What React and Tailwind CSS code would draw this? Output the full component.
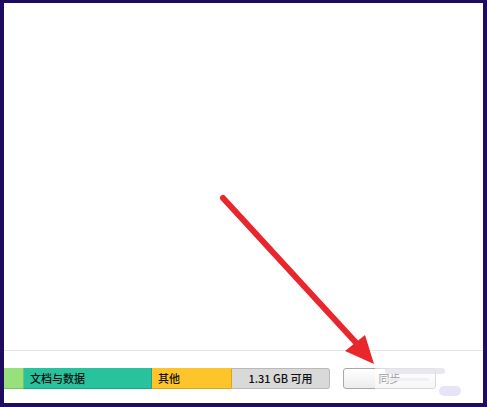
export default function App() {
  return (
    <div className="relative h-[407px] w-[487px] overflow-hidden border-[#1f0b5f] bg-white border-t-[3px] border-l-4 border-r-4 border-b-4 font-['Noto_Sans_CJK_SC',sans-serif]">
      <div className="flex h-full flex-col">
        <div className="flex-1" />
        <div className="h-px bg-[#e4e4e4]" />
        <div className="flex h-[52px] items-start pt-[17px]">
          {/* storage bar */}
          <div className="flex h-[21px] text-[11px] leading-none text-[#111]">
            <div className="w-[19px] border-b border-[#7cc265] bg-[#98e07c]" />
            <div className="flex w-[128px] items-center border-b border-l border-[#1fa583] border-l-[#7cc265] bg-[#28c39d] pl-[6px] font-medium">
              文档与数据
            </div>
            <div className="flex w-[80px] items-center border-b border-l border-[#d9a51e] border-l-[#1fa583] bg-[#fdc52a] pl-[6px] font-medium">
              其他
            </div>
            <div className="flex w-[99px] items-center justify-center rounded-r-[3px] border border-l-[#d9a51e] border-[#b9b9b9] bg-[#d9d9d9] font-medium">
              1.31 GB 可用
            </div>
          </div>
          <button className="ml-[13px] flex h-[21px] w-[93px] items-center justify-center rounded-[3px] border border-[#a9a9a9] bg-gradient-to-b from-white to-[#ececec] text-[11px] leading-none text-[#222]">
            同步
          </button>
        </div>
      </div>

      {/* watermark */}
      <div className="absolute left-[371px] top-[352px] flex h-[38px] w-[90px] flex-col justify-center gap-[4px] bg-white/55 px-[10px]">
        <div className="h-[6px] w-[60px] rounded-sm bg-[#e2e2ea]/80" />
        <div className="h-[3px] w-[44px] rounded-sm bg-[#ececf2]/80" />
      </div>
      <div className="absolute left-[435px] top-[383px] h-[10px] w-[22px] rounded-full bg-[#e6e4f6]" />

      {/* red arrow */}
      <svg className="pointer-events-none absolute left-[-4px] top-[-3px]" width="487" height="407" viewBox="0 0 487 407">
        <line x1="223" y1="198" x2="360" y2="347" stroke="#e8262b" strokeWidth="6" strokeLinecap="round" />
        <polygon points="345,351 365,335 374,364" fill="#e8262b" />
      </svg>
    </div>
  );
}
